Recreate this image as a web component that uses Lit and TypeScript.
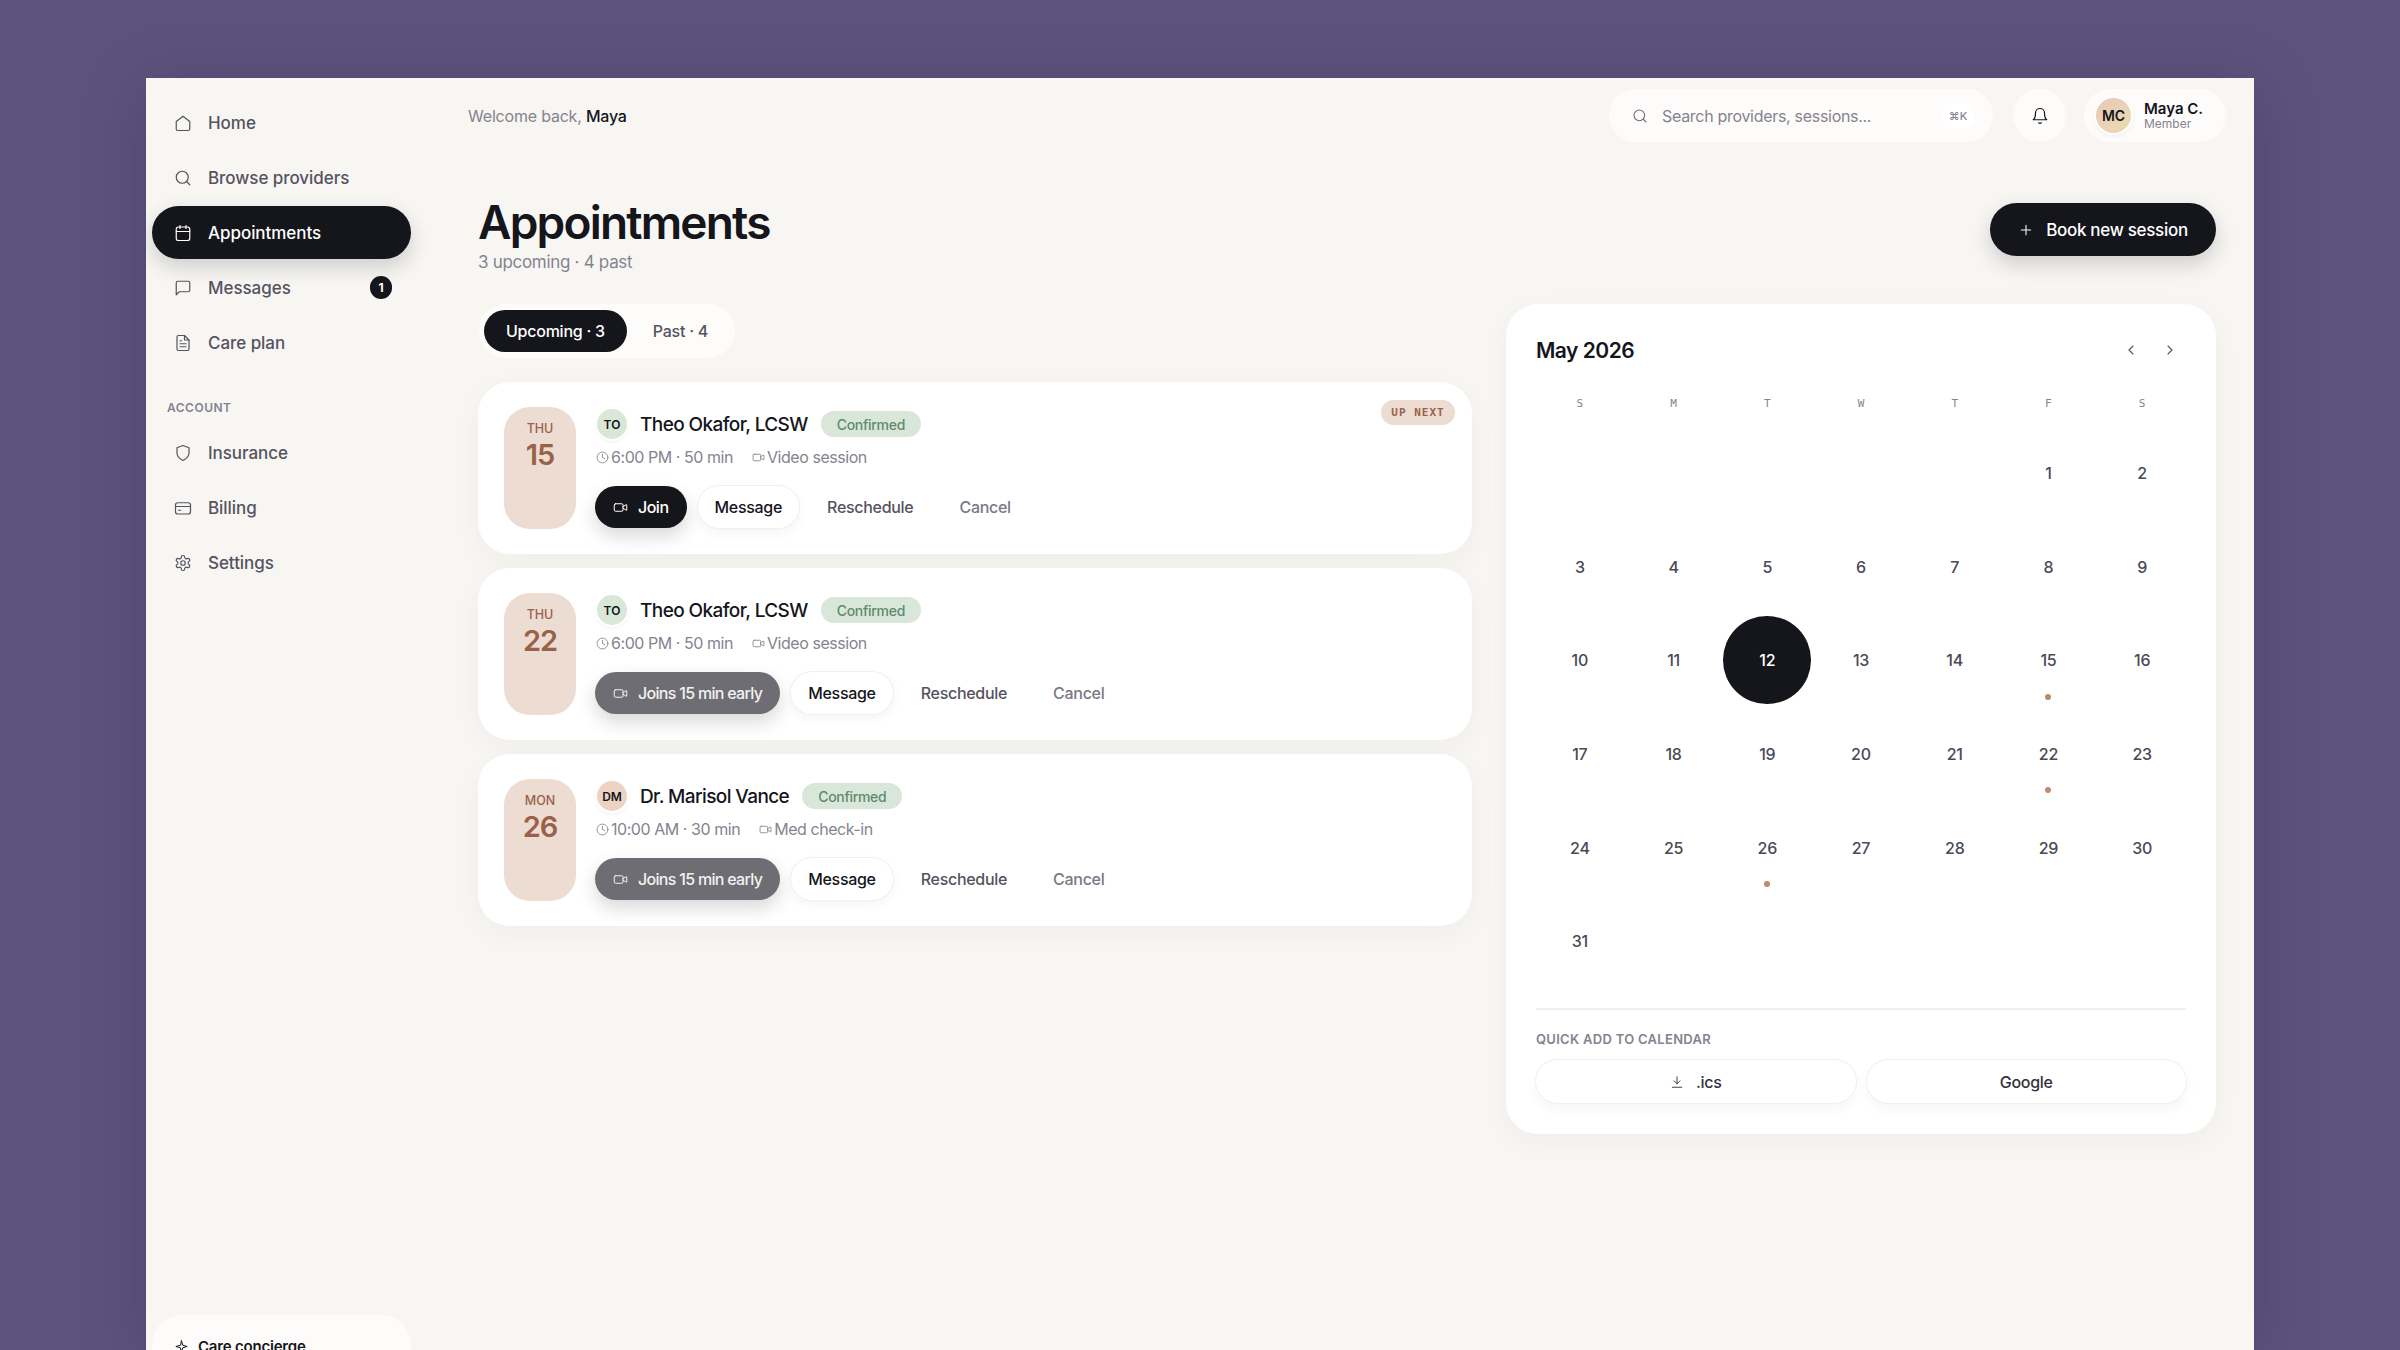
import { LitElement, html, css, svg } from "lit";
import { customElement } from "lit/decorators.js";

const P: Record<string, any> = {
  home: svg`<path d="m3 10 9-7 9 7v10a2 2 0 0 1-2 2H5a2 2 0 0 1-2-2z"/>`,
  search: svg`<circle cx="11" cy="11" r="8"/><path d="m21 21-4.3-4.3"/>`,
  cal: svg`<rect x="3" y="4" width="18" height="18" rx="3"/><path d="M16 2v4M8 2v4M3 10h18"/>`,
  msg: svg`<path d="M21 15a2 2 0 0 1-2 2H7l-4 4V5a2 2 0 0 1 2-2h14a2 2 0 0 1 2 2z"/>`,
  doc: svg`<path d="M14 2H6a2 2 0 0 0-2 2v16a2 2 0 0 0 2 2h12a2 2 0 0 0 2-2V8z"/><path d="M14 2v6h6M16 13H8M16 17H8M10 9H8"/>`,
  shield: svg`<path d="M12 22s8-4 8-10V5l-8-3-8 3v7c0 6 8 10 8 10z"/>`,
  card: svg`<rect x="2" y="5" width="20" height="15" rx="3"/><path d="M2 10h20M6 15h3"/>`,
  gear: svg`<path d="M12.22 2h-.44a2 2 0 0 0-2 2v.18a2 2 0 0 1-1 1.73l-.43.25a2 2 0 0 1-2 0l-.15-.08a2 2 0 0 0-2.73.73l-.22.38a2 2 0 0 0 .73 2.73l.15.1a2 2 0 0 1 1 1.72v.51a2 2 0 0 1-1 1.74l-.15.09a2 2 0 0 0-.73 2.73l.22.38a2 2 0 0 0 2.73.73l.15-.08a2 2 0 0 1 2 0l.43.25a2 2 0 0 1 1 1.73V20a2 2 0 0 0 2 2h.44a2 2 0 0 0 2-2v-.18a2 2 0 0 1 1-1.73l.43-.25a2 2 0 0 1 2 0l.15.08a2 2 0 0 0 2.73-.73l.22-.39a2 2 0 0 0-.73-2.73l-.15-.08a2 2 0 0 1-1-1.74v-.5a2 2 0 0 1 1-1.74l.15-.09a2 2 0 0 0 .73-2.73l-.22-.38a2 2 0 0 0-2.73-.73l-.15.08a2 2 0 0 1-2 0l-.43-.25a2 2 0 0 1-1-1.73V4a2 2 0 0 0-2-2z"/><circle cx="12" cy="12" r="3"/>`,
  bell: svg`<path d="M6 8a6 6 0 0 1 12 0c0 7 3 9 3 9H3s3-2 3-9"/><path d="M10.3 21a1.94 1.94 0 0 0 3.4 0"/>`,
  video: svg`<path d="m16 13 5.223 3.482a.5.5 0 0 0 .777-.416V7.87a.5.5 0 0 0-.752-.432L16 10.5"/><rect x="2" y="6" width="14" height="12" rx="2"/>`,
  clock: svg`<circle cx="12" cy="12" r="10"/><path d="M12 6v6l4 2"/>`,
  plus: svg`<path d="M12 5v14M5 12h14"/>`,
  left: svg`<path d="m15 18-6-6 6-6"/>`,
  right: svg`<path d="m9 18 6-6-6-6"/>`,
  dl: svg`<path d="M12 3v12M7 10l5 5 5-5M4 21h16"/>`,
  spark: svg`<path d="M12 3l2 7 7 2-7 2-2 7-2-7-7-2 7-2z"/>`,
};

const icon = (n: string, cls = "") =>
  html`<svg class="ic ${cls}" viewBox="0 0 24 24" fill="none" stroke="currentColor" stroke-width="1.6" stroke-linecap="round" stroke-linejoin="round">${P[n]}</svg>`;

const APPTS = [
  { dow: "THU", day: "15", ini: "TO", av: "green", name: "Theo Okafor, LCSW", time: "6:00 PM · 50 min", kind: "Video session", join: "Join", next: true },
  { dow: "THU", day: "22", ini: "TO", av: "green", name: "Theo Okafor, LCSW", time: "6:00 PM · 50 min", kind: "Video session", join: "Joins 15 min early", next: false },
  { dow: "MON", day: "26", ini: "DM", av: "peach", name: "Dr. Marisol Vance", time: "10:00 AM · 30 min", kind: "Med check-in", join: "Joins 15 min early", next: false },
];

@customElement("app-root")
export class AppRoot extends LitElement {
  static styles = css`
    :host { display: block; height: 1350px; overflow: hidden; background: #5c537d; font-family: Inter, "Liberation Sans", sans-serif; color: #15151c; padding: 78px 146px 0; box-sizing: border-box; }
    * { box-sizing: border-box; }
    .ic { display: block; flex: none; width: 18px; height: 18px; }
    .window { display: flex; height: 1272px; overflow: hidden; background: #f7f6f3; box-shadow: 0 10px 60px rgba(30,24,60,.22); }

    .side { flex: none; width: 272px; height: 1365px; padding: 18px 7px 18px 6px; display: flex; flex-direction: column; gap: 2px; }
    .nav { display: flex; align-items: center; gap: 16px; height: 53px; padding: 0 19px 0 22px; border-radius: 27px; font-size: 17px; font-weight: 500; letter-spacing: -0.05px; color: #55535f; }
    .nav.on { background: #15151c; color: #fff; box-shadow: 0 8px 20px rgba(20,20,28,.18); }
    .count { margin-left: auto; width: 22px; height: 23px; border-radius: 12px; background: #15151c; color: #fff; font-size: 12px; font-weight: 700; display: flex; align-items: center; justify-content: center; letter-spacing: 0; }
    .sect { padding: 29px 15px 8px; line-height: 16px; font-size: 12px; font-weight: 600; letter-spacing: .5px; color: #85838f; }
    .concierge { margin-top: auto; height: 110px; border-radius: 30px; background: #fdfcfa; padding: 22px 22px; display: flex; align-items: flex-start; gap: 9px; font-size: 15px; font-weight: 600; letter-spacing: -0.2px; }
    .concierge .ic { width: 15px; height: 15px; margin-top: 2px; }

    .main { flex: 1; min-width: 0; }
    .top { display: flex; align-items: center; height: 53px; margin: 11px 28px 0 50px; gap: 20px; }
    .welcome { font-size: 16px; color: #85838f; letter-spacing: -0.2px; margin-right: auto; }
    .welcome b { color: #15151c; font-weight: 500; }
    .pill { height: 53px; border-radius: 27px; background: #fdfcfa; display: flex; align-items: center; }
    .searchbox { width: 384px; padding: 0 19px 0 23px; gap: 14px; color: #85838f; font-size: 16px; letter-spacing: -0.3px; }
    .searchbox .ic { width: 16px; height: 16px; color: #6c6a76; }
    .kbd { margin-left: auto; width: 32px; height: 26px; border-radius: 10px; background: #fff; display: flex; align-items: center; justify-content: center; font-size: 11px; letter-spacing: 0; font-weight: 500; color: #85838f; }
    .bell { width: 53px; justify-content: center; margin-right: -2px; }
    .user { width: 142px; padding-left: 12px; gap: 13px; }
    .avatar { border-radius: 50%; display: flex; align-items: center; justify-content: center; font-weight: 600; flex: none; }
    .avatar.me { width: 35px; height: 35px; font-size: 14px; background: linear-gradient(135deg, #e8c8ba, #ecdcae); box-shadow: 0 0 0 2px #fff, 0 2px 6px rgba(20,20,28,.08); }
    .uname { font-size: 15px; font-weight: 600; line-height: 17px; letter-spacing: 0; }
    .urole { font-size: 12px; line-height: 14px; color: #85838f; }

    .content { padding: 51px 38px 0 60px; }
    .head { display: flex; align-items: flex-start; justify-content: space-between; margin-bottom: 31px; }
    h1 { margin: 0; font-size: 46px; font-weight: 600; line-height: 58px; letter-spacing: -1.8px; }
    .sub { font-size: 17px; line-height: 22px; color: #85838f; letter-spacing: -0.3px; }
    .book { display: flex; align-items: center; gap: 12px; height: 53px; width: 226px; justify-content: center; margin-top: 10px; border-radius: 27px; background: #15151c; color: #fff; font-size: 17px; font-weight: 500; letter-spacing: -0.3px; box-shadow: 0 8px 20px rgba(20,20,28,.18); }
    .book .ic { width: 16px; height: 16px; }

    .cols { display: grid; grid-template-columns: 994px 710px; gap: 34px; align-items: start; }
    .tabs { display: inline-flex; align-items: center; gap: 4px; height: 54px; margin-left: 1px; padding: 0 5px 0 5px; border-radius: 27px; background: #fdfcfa; font-size: 16px; font-weight: 500; vertical-align: top; }
    .tab { height: 42px; padding: 0 22px; border-radius: 21px; display: flex; align-items: center; color: #55535f; letter-spacing: -0.25px; }
    .tab.on { background: #15151c; color: #fff; }
    .list { display: flex; flex-direction: column; gap: 14px; margin-top: 24px; }

    .appt { position: relative; display: flex; gap: 20px; height: 172px; padding: 25px 26px; border-radius: 32px; background: #fff; box-shadow: 0 8px 28px rgba(60,50,30,.04); }
    .date { flex: none; width: 72px; height: 122px; border-radius: 26px; background: #ecdcd2; color: #9a614a; text-align: center; padding-top: 14px; }
    .dow { font-size: 12.5px; line-height: 16px; font-weight: 500; letter-spacing: 0; }
    .day { font-size: 29px; line-height: 36px; font-weight: 600; margin-top: 0; letter-spacing: -1px; }
    .info { min-width: 0; }
    .who { display: flex; align-items: center; height: 34px; gap: 13px; }
    .avatar.sm { width: 30px; height: 30px; font-size: 12px; box-shadow: 0 0 0 2px #fff, 0 2px 5px rgba(20,20,28,.1); margin-left: 1px; }
    .avatar.green { background: #d9e7d6; }
    .avatar.peach { background: #ecd3c2; }
    .name { font-size: 19px; font-weight: 500; letter-spacing: -0.6px; }
    .ok { height: 26px; padding: 0 16px; border-radius: 13px; background: #d9e7da; color: #5f8a6f; font-size: 14px; font-weight: 500; display: flex; align-items: center; letter-spacing: -0.3px; }
    .meta { display: flex; align-items: center; gap: 19px; height: 20px; margin-top: 6px; font-size: 16px; color: #85838f; letter-spacing: -0.45px; }
    .meta span { display: flex; align-items: center; gap: 2px; }
    .meta .ic { width: 13px; height: 13px; }
    .btns { display: flex; gap: 11px; margin-top: 19px; }
    .btn { height: 42px; padding: 0 17px; border-radius: 21px; display: flex; align-items: center; font-size: 16px; font-weight: 500; letter-spacing: -0.3px; color: #55535f; line-height: 43px; }
    .btn .ic { width: 15px; height: 15px; }
    .btn.go { gap: 10px; padding: 0 18px; margin-left: -1px; background: #15151c; color: #fff; box-shadow: 0 8px 18px rgba(20,20,28,.16); letter-spacing: -0.5px; }
    .btn.go.wait { background: #6e6d73; color: #f2f2f2; letter-spacing: -0.7px; }
    .btn.msg { background: #fff; color: #15151c; box-shadow: 0 0 0 1px #f1f0ed, 0 4px 12px rgba(20,20,28,.05); }
    .btn.can { color: #7a7884; padding-left: 18px; }
    .next { position: absolute; top: 18px; right: 17px; height: 25px; width: 74px; border-radius: 13px; background: #ecdcd2; color: #9a614a; font-family: "DejaVu Sans Mono", monospace; font-size: 11px; font-weight: 700; letter-spacing: 1px; display: flex; align-items: center; justify-content: center; white-space: pre; }

    .cal { height: 830px; padding: 30px; border-radius: 32px; background: #fff; box-shadow: 0 8px 28px rgba(60,50,30,.04); }
    .calhead { display: flex; align-items: center; height: 32px; }
    .month { font-size: 21px; font-weight: 600; letter-spacing: -0.5px; margin-right: auto; }
    .arrow { width: 16px; height: 16px; color: #55535f; margin-left: 23px; }
    .calhead .arrow:last-child { margin-right: 8px; }
    .grid { display: grid; grid-template-columns: repeat(7, 1fr); column-gap: 6px; row-gap: 6px; }
    .wk { margin-top: 30px; }
    .wk div { text-align: center; height: 16px; font-family: "DejaVu Sans Mono", monospace; font-size: 11px; line-height: 16px; color: #85838f; }
    .days { margin-top: 17px; padding-bottom: 23px; border-bottom: 2px solid #f0efec; }
    .d { position: relative; aspect-ratio: 1; border-radius: 50%; display: flex; align-items: center; justify-content: center; font-size: 16px; font-weight: 500; color: #4a4955; letter-spacing: -0.2px; }
    .d.sel { background: #15151c; color: #fff; }
    .d.dot::after { content: ""; position: absolute; left: 50%; top: 88%; width: 6px; height: 6px; margin-left: -3px; border-radius: 50%; background: #bd8a6c; }
    .qa { margin-top: 20px; font-size: 13px; line-height: 18px; font-weight: 600; color: #85838f; letter-spacing: .3px; }
    .qbtns { display: grid; grid-template-columns: 1fr 1fr; gap: 11px; margin-top: 12px; }
    .q { height: 43px; border-radius: 22px; background: #fff; box-shadow: 0 0 0 1px #f1f0ed, 0 6px 14px rgba(20,20,28,.04); display: flex; align-items: center; justify-content: center; gap: 12px; font-size: 16px; font-weight: 500; letter-spacing: -0.3px; color: #33323c; }
    .q .ic { width: 14px; height: 14px; }
  `;

  private nav(i: string, label: string, on = false, count?: string) {
    return html`<div class="nav ${on ? "on" : ""}">${icon(i)}<span>${label}</span>${count ? html`<span class="count">${count}</span>` : ""}</div>`;
  }

  private appt(a: (typeof APPTS)[number]) {
    return html`<div class="appt">
      <div class="date"><div class="dow">${a.dow}</div><div class="day">${a.day}</div></div>
      <div class="info">
        <div class="who"><div class="avatar sm ${a.av}">${a.ini}</div><div class="name">${a.name}</div><div class="ok">Confirmed</div></div>
        <div class="meta"><span>${icon("clock")}${a.time}</span><span>${icon("video")}${a.kind}</span></div>
        <div class="btns">
          <div class="btn go ${a.next ? "" : "wait"}">${icon("video")}${a.join}</div>
          <div class="btn msg">Message</div>
          <div class="btn">Reschedule</div>
          <div class="btn can">Cancel</div>
        </div>
      </div>
      ${a.next ? html`<div class="next">UP NEXT</div>` : ""}
    </div>`;
  }

  render() {
    const cells: any[] = [];
    for (let i = 0; i < 5; i++) cells.push(html`<div class="d"></div>`);
    for (let d = 1; d <= 31; d++) {
      const cls = d === 12 ? "sel" : [15, 22, 26].includes(d) ? "dot" : "";
      cells.push(html`<div class="d ${cls}">${d}</div>`);
    }
    return html`<div class="window">
      <aside class="side">
        ${this.nav("home", "Home")}
        ${this.nav("search", "Browse providers")}
        ${this.nav("cal", "Appointments", true)}
        ${this.nav("msg", "Messages", false, "1")}
        ${this.nav("doc", "Care plan")}
        <div class="sect">ACCOUNT</div>
        ${this.nav("shield", "Insurance")}
        ${this.nav("card", "Billing")}
        ${this.nav("gear", "Settings")}
        <div class="concierge">${icon("spark")}<span>Care concierge</span></div>
      </aside>
      <main class="main">
        <header class="top">
          <div class="welcome">Welcome back, <b>Maya</b></div>
          <div class="pill searchbox">${icon("search")}<span>Search providers, sessions...</span><span class="kbd">⌘K</span></div>
          <div class="pill bell">${icon("bell")}</div>
          <div class="pill user"><div class="avatar me">MC</div><div><div class="uname">Maya C.</div><div class="urole">Member</div></div></div>
        </header>
        <div class="content">
          <div class="head">
            <div><h1>Appointments</h1><div class="sub">3 upcoming · 4 past</div></div>
            <div class="book">${icon("plus")}Book new session</div>
          </div>
          <div class="cols">
            <section>
              <div class="tabs"><div class="tab on">Upcoming · 3</div><div class="tab">Past · 4</div></div>
              <div class="list">${APPTS.map((a) => this.appt(a))}</div>
            </section>
            <section class="cal">
              <div class="calhead"><div class="month">May 2026</div>${icon("left", "arrow")}${icon("right", "arrow")}</div>
              <div class="grid wk">${["S", "M", "T", "W", "T", "F", "S"].map((w) => html`<div>${w}</div>`)}</div>
              <div class="grid days">${cells}</div>
              <div class="qa">QUICK ADD TO CALENDAR</div>
              <div class="qbtns"><div class="q">${icon("dl")}.ics</div><div class="q">Google</div></div>
            </section>
          </div>
        </div>
      </main>
    </div>`;
  }
}
